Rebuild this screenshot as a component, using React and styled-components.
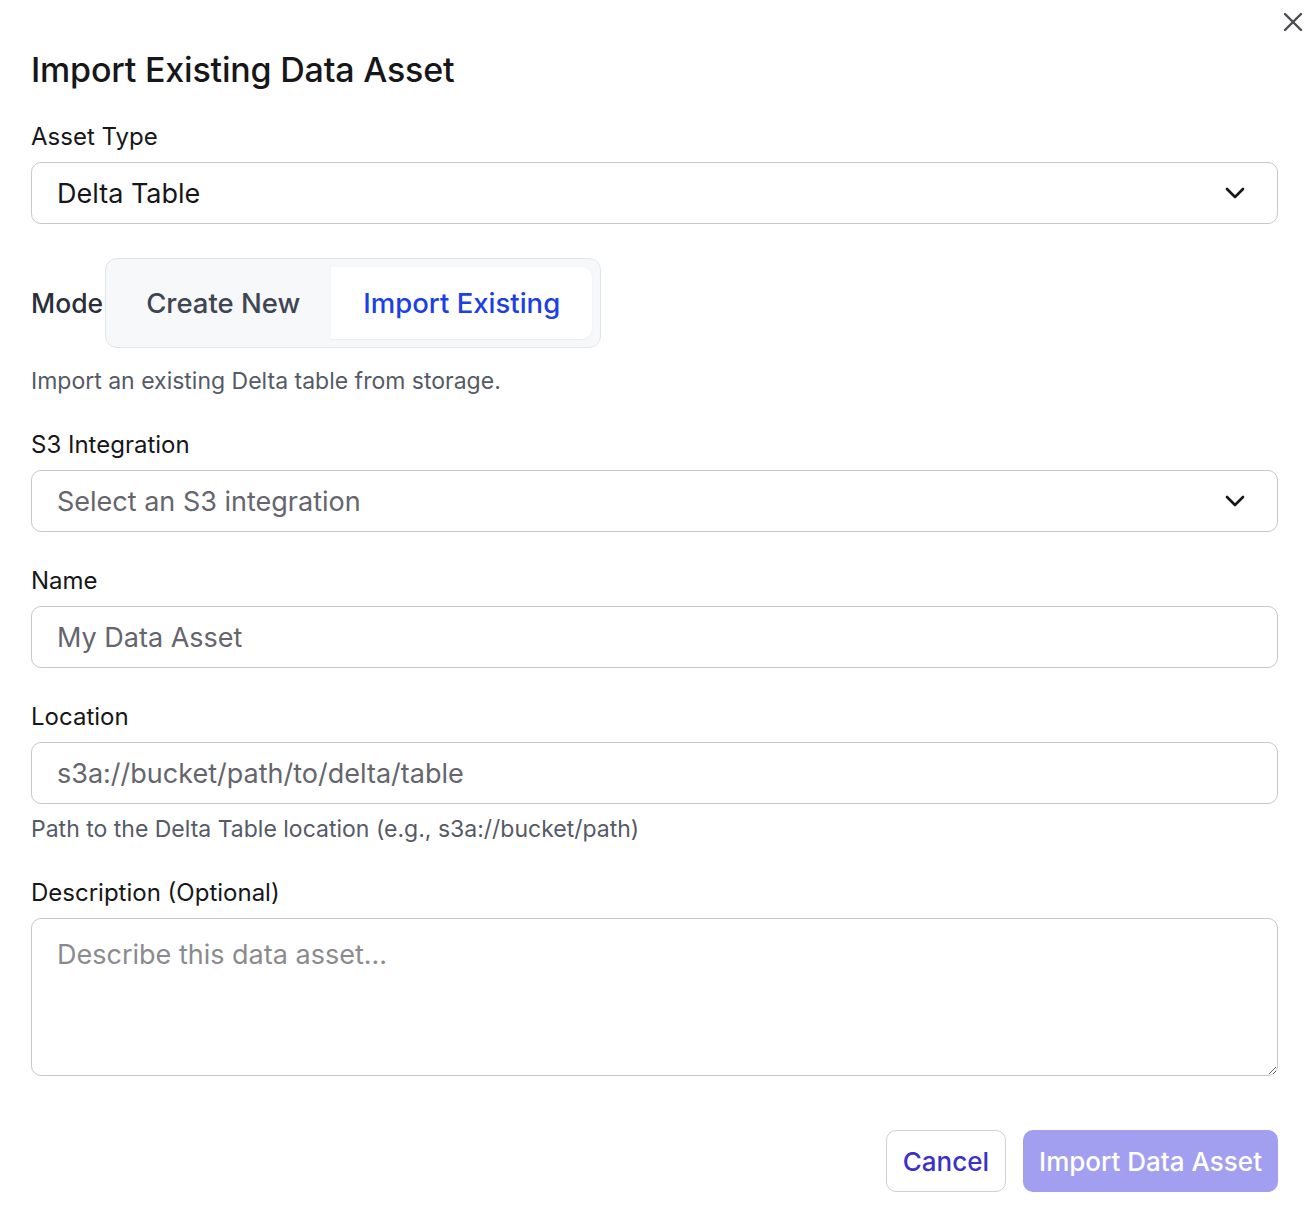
import React, { useState } from 'react';
import styled, { createGlobalStyle } from 'styled-components';

const GlobalStyle = createGlobalStyle`
  * { box-sizing: border-box; }
  body {
    margin: 0;
    background: #ffffff;
    font-family: Inter, "Noto Sans", sans-serif;
    color: #17171a;
  }
`;

const Dialog = styled.div`
  position: relative;
  width: 1316px;
  min-height: 1206px;
  padding: 48px 38px 0 31px;
  background: #fff;
`;

const CloseButton = styled.button`
  position: absolute;
  top: 10px;
  right: 11px;
  width: 24px;
  height: 24px;
  padding: 0;
  border: none;
  background: none;
  color: #4a4a4f;
  cursor: pointer;
`;

const Title = styled.h2`
  margin: 0 0 30px;
  font-size: 34px;
  line-height: 44px;
  font-weight: 500;
  letter-spacing: -0.2px;
`;

const Label = styled.label`
  display: block;
  margin-bottom: 10px;
  font-size: 24px;
  line-height: 30px;
  color: #17171a;
`;

const Field = styled.div`
  margin-bottom: ${(p) => p.$gap ?? 34}px;
  margin-top: ${(p) => p.$top || 0}px;
`;

const SelectBox = styled.div`
  display: flex;
  align-items: center;
  justify-content: space-between;
  height: 62px;
  padding: 0 32px 0 25px;
  border: 1.5px solid #c8c8cd;
  border-radius: 10px;
  font-size: 27px;
  color: ${(p) => (p.$placeholder ? '#65656d' : '#17171a')};
`;

const TextInput = styled.input`
  display: block;
  width: 100%;
  height: 62px;
  padding: 0 25px;
  border: 1.5px solid #c8c8cd;
  border-radius: 10px;
  font-family: inherit;
  font-size: 27px;
  color: #17171a;
  outline: none;
  &::placeholder {
    color: #65656d;
  }
`;

const TextArea = styled.textarea`
  display: block;
  width: 100%;
  height: 158px;
  padding: 19px 25px;
  border: 1.5px solid #c8c8cd;
  border-radius: 10px;
  font-family: inherit;
  font-size: 27px;
  color: #17171a;
  outline: none;
  resize: vertical;
  &::placeholder {
    color: #8b8b8f;
  }
`;

const Hint = styled.p`
  margin: ${(p) => p.$top || 0}px 0 0;
  font-size: 23px;
  line-height: 26px;
  color: #555a66;
`;

const ModeRow = styled.div`
  display: flex;
  align-items: center;
  margin-bottom: 20px;
`;

const ModeLabel = styled.span`
  font-size: 26.5px;
  font-weight: 500;
  color: #2a2e38;
`;

const Segmented = styled.div`
  display: flex;
  margin-left: 2px;
  padding: 8px 8px 8px 0;
  height: 90px;
  border: 1.5px solid #e1e3e8;
  border-radius: 12px;
  background: #f7f8fa;
`;

const Segment = styled.button`
  padding: 0 ${(p) => (p.$active ? 32 : 31)}px 0 ${(p) => (p.$active ? 32 : 40)}px;
  border: none;
  border-radius: ${(p) => (p.$active ? '0 10px 10px 0' : '10px')};
  background: ${(p) => (p.$active ? '#ffffff' : 'transparent')};
  box-shadow: ${(p) => (p.$active ? '0 1px 2px rgba(20, 24, 40, 0.06)' : 'none')};
  font-family: inherit;
  font-size: 27.5px;
  font-weight: 500;
  color: ${(p) => (p.$active ? '#1a40e6' : '#3e4553')};
  cursor: pointer;
`;

const Footer = styled.div`
  display: flex;
  justify-content: flex-end;
  gap: 17px;
  margin-top: 54px;
`;

const Button = styled.button`
  height: 62px;
  padding: 0 16px;
  border-radius: 10px;
  font-family: inherit;
  font-size: 26px;
  font-weight: 500;
  border: ${(p) => (p.$primary ? 'none' : '1.5px solid #cfcfd4')};
  background: ${(p) => (p.$primary ? '#a39ff0' : '#ffffff')};
  color: ${(p) => (p.$primary ? '#ffffff' : '#3b30c8')};
  cursor: pointer;
`;

const Chevron = () => (
  <svg width="20" height="12" viewBox="0 0 20 12" fill="none">
    <path d="M2 2l8 8 8-8" stroke="#17171a" strokeWidth="2.6" strokeLinecap="round" strokeLinejoin="round" />
  </svg>
);

export default function App() {
  const [mode, setMode] = useState('import');

  return (
    <>
      <GlobalStyle />
      <Dialog>
        <CloseButton aria-label="Close">
          <svg width="24" height="24" viewBox="0 0 24 24" fill="none">
            <path d="M4 4l16 16M20 4L4 20" stroke="currentColor" strokeWidth="2.4" strokeLinecap="round" />
          </svg>
        </CloseButton>

        <Title>Import Existing Data Asset</Title>

        <Field>
          <Label>Asset Type</Label>
          <SelectBox>
            Delta Table
            <Chevron />
          </SelectBox>
        </Field>

        <ModeRow>
          <ModeLabel>Mode</ModeLabel>
          <Segmented>
            <Segment $active={mode === 'create'} onClick={() => setMode('create')}>
              Create New
            </Segment>
            <Segment $active={mode === 'import'} onClick={() => setMode('import')}>
              Import Existing
            </Segment>
          </Segmented>
        </ModeRow>

        <Hint>Import an existing Delta table from storage.</Hint>

        <Field $top={36}>
          <Label>S3 Integration</Label>
          <SelectBox $placeholder>
            Select an S3 integration
            <Chevron />
          </SelectBox>
        </Field>

        <Field>
          <Label>Name</Label>
          <TextInput placeholder="My Data Asset" />
        </Field>

        <Field $gap={36}>
          <Label>Location</Label>
          <TextInput placeholder="s3a://bucket/path/to/delta/table" />
          <Hint $top={12}>Path to the Delta Table location (e.g., s3a://bucket/path)</Hint>
        </Field>

        <Field $gap={0}>
          <Label>Description (Optional)</Label>
          <TextArea placeholder="Describe this data asset..." />
        </Field>

        <Footer>
          <Button>Cancel</Button>
          <Button $primary>Import Data Asset</Button>
        </Footer>
      </Dialog>
    </>
  );
}
